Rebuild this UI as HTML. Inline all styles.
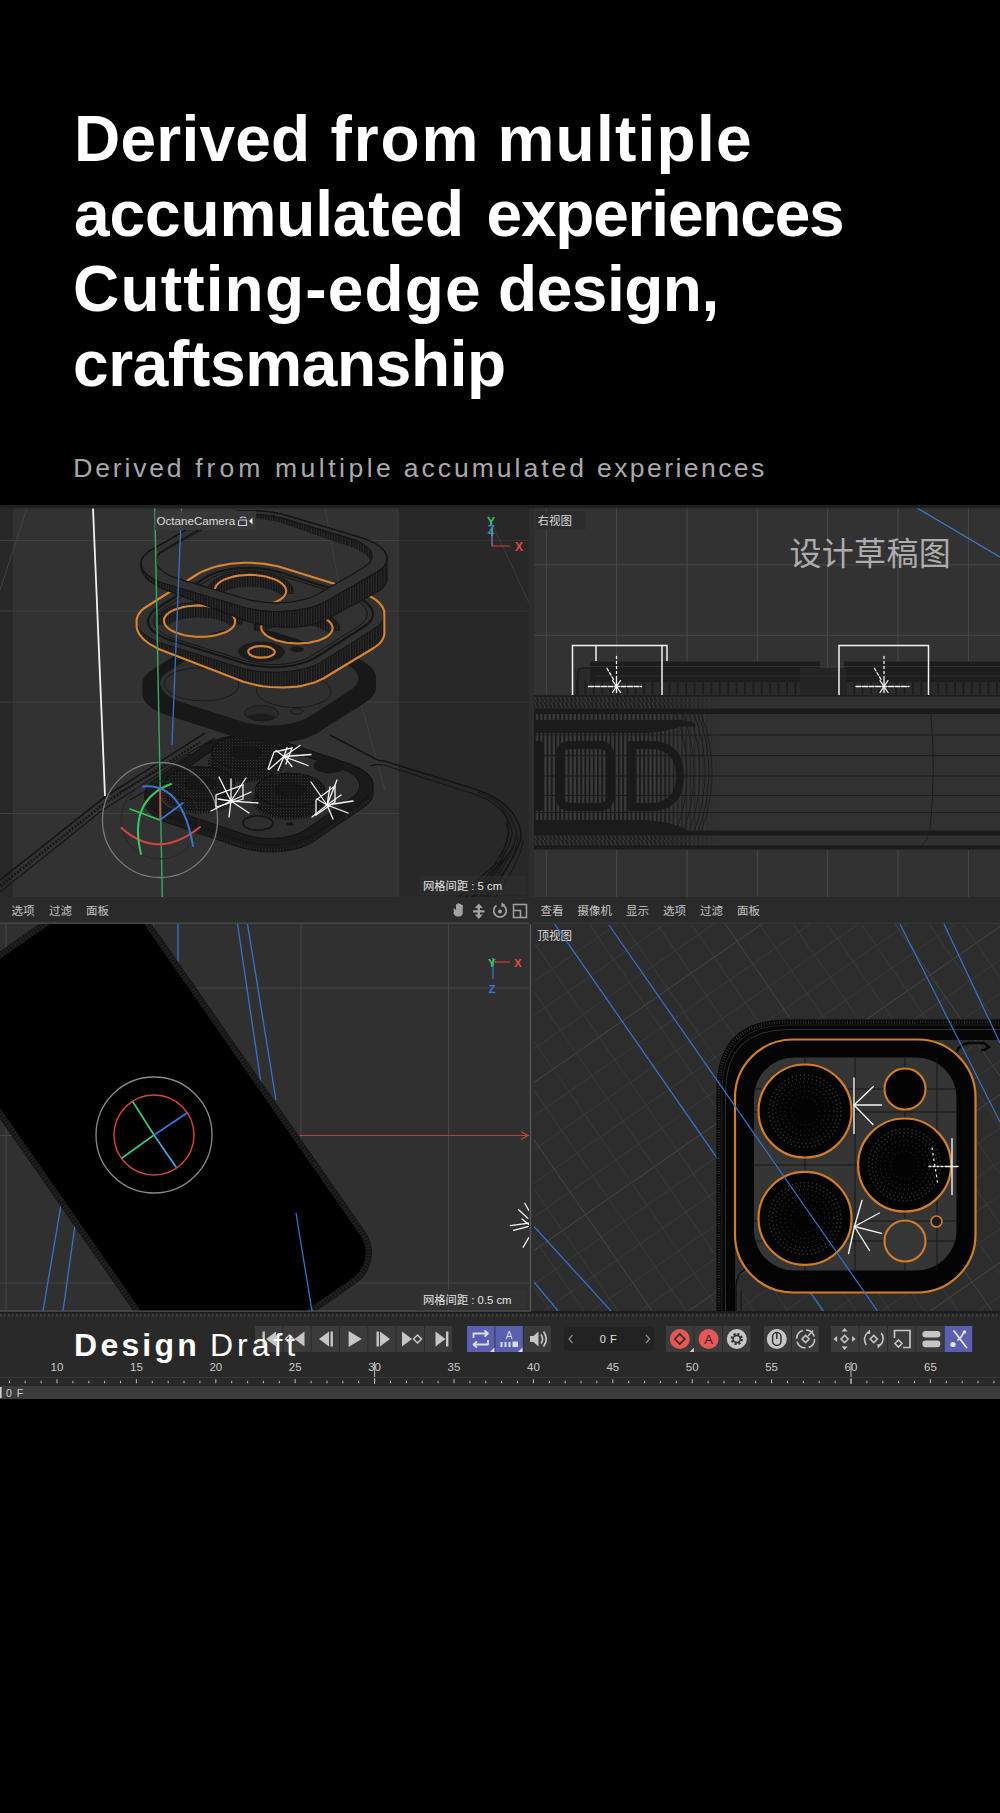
<!DOCTYPE html>
<html><head><meta charset="utf-8"><title>Design Draft</title>
<style>
html,body{margin:0;padding:0;background:#000;}
body{width:1000px;height:1813px;position:relative;overflow:hidden;font-family:"Liberation Sans","Noto Sans CJK SC",sans-serif;}
.h{position:absolute;color:#fff;font-weight:bold;font-size:64px;line-height:75px;white-space:nowrap;transform-origin:0 0;}
.sub{position:absolute;color:#a9a9a9;font-size:26.5px;line-height:36px;white-space:nowrap;}
#shot{position:absolute;left:0;top:505px;width:1000px;height:894px;display:block;}
.dd{position:absolute;color:#fff;font-size:32px;line-height:40px;white-space:nowrap;}
</style></head><body>
<span class="h" style="left:74.0px;top:102.1px;letter-spacing:0.22px">Derived</span>
<span class="h" style="left:330.6px;top:102.1px;letter-spacing:1.83px">from</span>
<span class="h" style="left:497.4px;top:102.1px;letter-spacing:1.26px">multiple</span>
<span class="h" style="left:74.0px;top:177.1px;letter-spacing:-0.12px">accumulated</span>
<span class="h" style="left:486.5px;top:177.1px;letter-spacing:-1.19px">experiences</span>
<span class="h" style="left:73.0px;top:252.1px;letter-spacing:1.18px">Cutting-edge</span>
<span class="h" style="left:498.0px;top:252.1px;letter-spacing:-0.46px">design,</span>
<span class="h" style="left:73.0px;top:327.1px;letter-spacing:-0.36px">craftsmanship</span>
<span class="sub" style="left:73.2px;top:450px;letter-spacing:2.84px">Derived</span>
<span class="sub" style="left:195.2px;top:450px;letter-spacing:4.02px">from</span>
<span class="sub" style="left:275.0px;top:450px;letter-spacing:3.49px">multiple</span>
<span class="sub" style="left:403.8px;top:450px;letter-spacing:2.99px">accumulated</span>
<span class="sub" style="left:597.0px;top:450px;letter-spacing:2.44px">experiences</span>
<svg id="shot" viewBox="0 505 1000 894" width="1000" height="894" font-family="'Liberation Sans','Noto Sans CJK SC',sans-serif">
<rect x="0" y="505" width="1000" height="894" fill="#2a2a2a"/>
<rect x="0" y="505" width="1000" height="3.5" fill="#202020"/>
<rect x="0" y="508.5" width="13" height="389" fill="#282828"/>
<rect x="13" y="508.5" width="386" height="389" fill="#323232"/>
<rect x="399" y="508.5" width="130" height="389" fill="#282828"/>
<rect x="529" y="508.5" width="5" height="803" fill="#2d2d2d"/>
<rect x="534" y="508.5" width="466" height="389" fill="#323232"/>
<rect x="0" y="924" width="529" height="387" fill="#303030"/>
<rect x="534" y="924" width="466" height="387" fill="#2d2d2d"/>

<defs><clipPath id="cTL"><rect x="0" y="508.5" width="529" height="388.5"/></clipPath>
<pattern id="hv" width="2.6" height="8" patternUnits="userSpaceOnUse"><rect width="2.6" height="8" fill="#2b2b2b"/><rect width="1.4" height="8" fill="#141414"/></pattern>
<pattern id="dots" width="3" height="3" patternUnits="userSpaceOnUse"><rect width="3" height="3" fill="#181818"/><rect width="1" height="1" x="1" y="1" fill="#343434"/></pattern>
</defs>
<g clip-path="url(#cTL)">
<g stroke="#414141" stroke-width="1" fill="none">
<line x1="0" y1="540.5" x2="399" y2="540.5"/>
<line x1="399" y1="540.5" x2="529" y2="540.5" stroke="#343434"/>
<line x1="0" y1="611" x2="399" y2="611"/>
<line x1="399" y1="611" x2="529" y2="611" stroke="#343434"/>
<line x1="0" y1="702" x2="399" y2="702"/>
<line x1="399" y1="702" x2="529" y2="702" stroke="#343434"/>
<line x1="0" y1="813.5" x2="399" y2="813.5"/>
<path d="M27 508 L0 590"/><path d="M488 515 L530 605" stroke="#3c3c3c"/><path d="M325 508 L360 700 L385 790" stroke="#3f3f3f"/>
</g>
<g fill="none" stroke="#151515" stroke-width="1.6">
<path d="M-5 884 L105 797 L205 733"/>
<path d="M-5 890 L105 803 L200 742" stroke-width="2.4" stroke-dasharray="2 1.5"/>
<path d="M-5 896 L100 812 L190 754" stroke-width="1.2"/>
<path d="M478 792 Q510 804 516 832 Q518 850 477 905" stroke="#1e1e1e" stroke-width="2.5"/>
<path d="M500 806 Q508 815 509 832 Q509 848 466 905" stroke="#1c1c1c" stroke-width="1.4"/>
<path d="M330 735 L372 757 Q378 761 384 761 L478 790 Q515 803 521 832 Q523 850 480 905"/>
<path d="M370 766 Q376 764 384 765 L474 794 Q507 805 512 832 Q513 848 470 905" stroke-width="1.2"/>
<path d="M523 840 Q522 860 490 905" stroke-width="1"/><path d="M518 836 Q518 856 484 905" stroke-width="1"/>
<path d="M120 792 L215 738 M130 800 L222 746" stroke-width="1.1"/>
<path d="M514 846 L474 905 M510 852 L467 905 M505 858 L458 905 M498 862 L449 905" stroke-width="1.2"/>
<path d="M506 822 Q512 836 500 858" stroke-width="1.2"/>
</g>
<path d="M244.0 735.2 232.2 736.1 221.2 738.3 216.2 739.8 207.4 743.7 151.1 782.5 148.6 785.1 146.7 787.8 145.5 790.6 144.9 793.5 145.0 803.4 145.7 806.2 147.2 809.0 149.2 811.7 155.2 816.8 163.3 821.1 240.0 847.1 250.5 849.9 262.1 851.5 274.0 851.8 280.0 851.5 285.8 850.9 296.8 848.7 301.8 847.2 310.6 843.3 363.8 806.9 366.9 804.5 369.4 801.9 371.3 799.2 372.5 796.4 373.1 793.5 373.0 783.6 372.3 780.8 370.8 778.0 368.8 775.3 366.1 772.7 359.0 768.0 350.0 764.1 272.9 738.3 261.8 736.1 255.9 735.5Z" fill="#191919" stroke="#141414" stroke-width="1.2"/>
<path d="M314.2 839.1 366.9 802.5 369.4 799.9 371.3 797.2 372.5 794.4 373.1 791.5 373.0 788.6 372.3 785.8 370.8 783.0 368.8 780.3 362.8 775.2 359.0 773.0 350.0 769.1 278.0 744.9 272.9 743.3 261.8 741.1 250.0 740.2 238.0 740.5 226.6 742.1 216.2 744.8 207.4 748.7 151.1 787.5 148.6 790.1 146.7 792.8 145.5 795.6 144.9 798.5 145.0 801.4 145.7 804.2 147.2 807.0 149.2 809.7 155.2 814.8 163.3 819.1 245.1 846.7 256.2 848.9 268.0 849.8 280.0 849.5 285.8 848.9 296.8 846.7 306.4 843.4Z" fill="none" stroke="#2c2c2c" stroke-width="3" stroke-dasharray="1 2" opacity="0.8"/>
<path d="M314.2 834.1 366.9 797.5 369.4 794.9 371.3 792.2 372.5 789.4 373.1 786.5 373.0 783.6 372.3 780.8 370.8 778.0 368.8 775.3 362.8 770.2 359.0 768.0 350.0 764.1 278.0 739.9 272.9 738.3 261.8 736.1 250.0 735.2 238.0 735.5 226.6 737.1 216.2 739.8 207.4 743.7 151.1 782.5 148.6 785.1 146.7 787.8 145.5 790.6 144.9 793.5 145.0 796.4 145.7 799.2 147.2 802.0 149.2 804.7 155.2 809.8 163.3 814.1 245.1 841.7 256.2 843.9 268.0 844.8 280.0 844.5 285.8 843.9 296.8 841.7 306.4 838.4Z" fill="#1a1a1a" stroke="#141414" stroke-width="1"/>
<path d="M306.2 829.4 354.4 795.8 358.1 791.4 359.2 789.0 359.6 786.7 359.6 784.2 358.9 781.9 357.7 779.5 356.0 777.2 353.8 775.1 347.9 771.2 340.3 768.0 273.9 745.5 269.6 744.3 260.4 742.4 250.5 741.6 240.5 741.9 230.9 743.2 222.2 745.5 214.9 748.7 163.6 784.2 159.9 788.6 158.8 791.0 158.4 793.3 158.4 795.8 159.1 798.1 162.0 802.8 166.9 807.0 173.7 810.5 248.4 835.7 257.6 837.6 267.5 838.4 272.5 838.4 282.4 837.6 291.6 835.7 299.6 833.0Z" fill="#2d2d2d" stroke="#121212" stroke-width="1"/>
<path d="M341.8 770.3 343.9 768.2 344.4 767.1 344.5 765.9 343.6 763.6 342.7 762.5 339.7 760.7 333.4 758.9 326.2 758.6 319.5 760.0 316.2 761.7 314.1 763.8 313.6 764.9 313.7 767.2 315.3 769.5 318.3 771.3 324.6 773.1 329.4 773.5 334.2 773.1 338.5 772.0Z" fill="#171717"/>
<path d="M245.1 735.8 239.6 736.1 229.3 737.7 220.7 740.9 217.2 742.9 214.5 745.1 212.5 747.6 211.4 750.2 211.1 763.8 211.6 766.4 213.1 769.0 215.3 771.4 218.3 773.6 221.9 775.6 230.9 778.6 236.1 779.6 246.9 780.4 252.4 780.1 262.7 778.5 271.3 775.3 274.8 773.3 277.5 771.1 279.5 768.6 280.6 766.0 280.9 752.4 280.4 749.8 278.9 747.2 276.7 744.8 273.7 742.6 270.1 740.6 261.1 737.6 255.9 736.6Z" fill="url(#dots)"/><path d="M276.0 773.7 278.8 771.4 280.8 768.8 282.0 766.1 282.3 763.4 281.7 760.7 280.3 758.0 277.9 755.5 274.8 753.2 271.0 751.1 266.6 749.4 261.7 748.0 250.7 746.3 245.1 746.1 233.9 747.1 228.7 748.1 223.9 749.6 219.6 751.4 216.0 753.5 213.2 755.8 211.2 758.4 210.0 761.1 209.7 763.8 210.3 766.5 211.7 769.2 214.1 771.7 217.2 774.0 221.0 776.1 230.3 779.2 241.3 780.9 246.9 781.1 258.1 780.1 268.1 777.6 272.4 775.8Z" fill="none" stroke="#101010" stroke-width="3.5" stroke-dasharray="1 1.6"/><path d="M274.8 762.3 277.5 760.1 279.5 757.6 280.6 755.0 280.9 752.4 280.4 749.8 278.9 747.2 276.7 744.8 273.7 742.6 270.1 740.6 265.8 738.9 261.1 737.6 255.9 736.6 245.1 735.8 239.6 736.1 229.3 737.7 220.7 740.9 217.2 742.9 214.5 745.1 212.5 747.6 211.4 750.2 211.1 752.8 211.6 755.4 213.1 758.0 215.3 760.4 218.3 762.6 221.9 764.6 230.9 767.6 241.4 769.2 252.4 769.1 262.7 767.5 271.3 764.3Z" fill="url(#dots)" stroke="#101010" stroke-width="1"/><path d="M259.0 757.0 260.2 756.0 261.6 753.7 261.5 751.3 260.8 750.2 259.8 749.1 256.8 747.2 250.5 745.4 243.1 745.2 236.4 746.5 233.0 748.2 231.8 749.2 230.4 751.5 230.5 753.9 232.2 756.1 235.2 758.0 241.5 759.8 246.4 760.2 251.2 759.8 255.6 758.7Z" fill="#141414" opacity="0.75"/>
<path d="M199.1 766.6 193.6 766.9 183.3 768.5 174.7 771.7 171.2 773.7 168.5 775.9 166.5 778.4 165.4 781.0 165.1 794.6 165.6 797.2 167.1 799.8 169.3 802.2 172.3 804.4 175.9 806.4 184.9 809.4 190.1 810.4 200.9 811.2 206.4 810.9 216.7 809.3 225.3 806.1 228.8 804.1 231.5 801.9 233.5 799.4 234.6 796.8 234.9 783.2 234.4 780.6 232.9 778.0 230.7 775.6 227.7 773.4 224.1 771.4 215.1 768.4 209.9 767.4Z" fill="url(#dots)"/><path d="M230.0 804.5 232.8 802.2 234.8 799.6 236.0 796.9 236.3 794.2 235.7 791.5 234.3 788.8 231.9 786.3 228.8 784.0 225.0 781.9 220.6 780.2 215.7 778.8 204.7 777.1 199.1 776.9 187.9 777.9 182.7 778.9 177.9 780.4 173.6 782.2 170.0 784.3 167.2 786.6 165.2 789.2 164.0 791.9 163.7 794.6 164.3 797.3 165.7 800.0 168.1 802.5 171.2 804.8 175.0 806.9 184.3 810.0 195.3 811.7 200.9 811.9 212.1 810.9 222.1 808.4 226.4 806.6Z" fill="none" stroke="#101010" stroke-width="3.5" stroke-dasharray="1 1.6"/><path d="M228.8 793.1 231.5 790.9 233.5 788.4 234.6 785.8 234.9 783.2 234.4 780.6 232.9 778.0 230.7 775.6 227.7 773.4 224.1 771.4 219.8 769.7 215.1 768.4 209.9 767.4 199.1 766.6 193.6 766.9 183.3 768.5 174.7 771.7 171.2 773.7 168.5 775.9 166.5 778.4 165.4 781.0 165.1 783.6 165.6 786.2 167.1 788.8 169.3 791.2 172.3 793.4 175.9 795.4 184.9 798.4 195.4 800.0 206.4 799.9 216.7 798.3 225.3 795.1Z" fill="url(#dots)" stroke="#101010" stroke-width="1"/><path d="M213.0 787.8 214.2 786.8 215.6 784.5 215.5 782.1 214.8 781.0 213.8 779.9 210.8 778.0 204.5 776.2 197.1 776.0 190.4 777.3 187.0 779.0 185.8 780.0 184.4 782.3 184.5 784.7 186.2 786.9 189.2 788.8 195.5 790.6 200.4 791.0 205.2 790.6 209.6 789.5Z" fill="#141414" opacity="0.75"/>
<path d="M289.1 773.2 283.6 773.5 273.3 775.1 264.7 778.3 261.2 780.3 258.5 782.5 256.5 785.0 255.4 787.6 255.1 801.2 255.6 803.8 257.1 806.4 259.3 808.8 262.3 811.0 265.9 813.0 274.9 816.0 280.1 817.0 290.9 817.8 296.4 817.5 306.7 815.9 315.3 812.7 318.8 810.7 321.5 808.5 323.5 806.0 324.6 803.4 324.9 789.8 324.4 787.2 322.9 784.6 320.7 782.2 317.7 780.0 314.1 778.0 305.1 775.0 299.9 774.0Z" fill="url(#dots)"/><path d="M320.0 811.1 322.8 808.8 324.8 806.2 326.0 803.5 326.3 800.8 325.7 798.1 324.3 795.4 321.9 792.9 318.8 790.6 315.0 788.5 310.6 786.8 305.7 785.4 294.7 783.7 289.1 783.5 277.9 784.5 272.7 785.5 267.9 787.0 263.6 788.8 260.0 790.9 257.2 793.2 255.2 795.8 254.0 798.5 253.7 801.2 254.3 803.9 255.7 806.6 258.1 809.1 261.2 811.4 265.0 813.5 274.3 816.6 285.3 818.3 290.9 818.5 302.1 817.5 312.1 815.0 316.4 813.2Z" fill="none" stroke="#101010" stroke-width="3.5" stroke-dasharray="1 1.6"/><path d="M318.8 799.7 321.5 797.5 323.5 795.0 324.6 792.4 324.9 789.8 324.4 787.2 322.9 784.6 320.7 782.2 317.7 780.0 314.1 778.0 309.8 776.3 305.1 775.0 299.9 774.0 289.1 773.2 283.6 773.5 273.3 775.1 264.7 778.3 261.2 780.3 258.5 782.5 256.5 785.0 255.4 787.6 255.1 790.2 255.6 792.8 257.1 795.4 259.3 797.8 262.3 800.0 265.9 802.0 270.2 803.7 280.1 806.0 290.9 806.8 301.7 805.9 311.3 803.5 315.3 801.7Z" fill="url(#dots)" stroke="#101010" stroke-width="1"/><path d="M303.0 794.4 304.2 793.4 305.6 791.1 305.5 788.7 304.8 787.6 303.8 786.5 300.8 784.6 294.5 782.8 287.1 782.6 280.4 783.9 277.0 785.6 274.9 787.7 274.4 788.9 274.5 791.3 276.2 793.5 279.2 795.4 285.5 797.2 290.4 797.6 295.2 797.2 299.6 796.1Z" fill="#141414" opacity="0.75"/>
<path d="M270.4 827.2 271.6 826.2 272.9 824.1 272.8 821.8 271.2 819.7 269.9 818.7 264.5 816.5 257.6 815.8 250.8 816.6 245.6 818.8 244.4 819.8 243.1 821.9 243.2 824.2 244.8 826.3 247.6 828.2 251.5 829.5 256.0 830.1 260.7 830.1 265.2 829.4Z" fill="#2e2e2e" stroke="#141414" stroke-width="1.6"/>
<path d="M292.8 824.9 293.4 824.2 293.2 823.5 291.5 822.5 288.4 822.6 287.2 823.1 286.6 823.8 287.0 824.8 288.5 825.5 290.6 825.6Z" fill="#141414"/>
<path d="M243.2 628.5 230.4 629.4 224.3 630.3 213.0 633.1 203.5 636.9 149.0 672.1 146.3 674.7 144.2 677.5 142.9 680.3 142.4 683.2 142.5 695.6 143.4 698.6 145.0 701.4 147.3 704.2 150.3 706.8 153.9 709.4 162.8 713.8 238.0 738.0 243.6 739.6 255.8 741.9 268.7 743.0 275.2 743.0 281.7 742.7 294.1 741.2 305.4 738.4 314.9 734.6 366.1 701.9 369.4 699.4 372.1 696.8 374.2 694.0 375.5 691.2 376.0 688.3 375.9 675.9 375.0 672.9 373.4 670.1 371.1 667.3 368.1 664.7 360.3 659.8 350.4 655.9 274.8 631.9 262.6 629.6 249.7 628.5Z" fill="#181818"/>
<path d="M310.3 716.3 352.6 688.8 354.9 686.5 356.6 684.2 357.7 681.7 358.2 679.2 358.1 676.7 357.3 674.2 356.0 671.7 354.0 669.3 348.3 664.9 344.7 662.9 336.1 659.5 277.8 640.8 267.8 638.3 257.0 636.9 251.3 636.5 240.1 636.7 229.4 638.1 219.7 640.4 211.5 643.7 165.8 673.2 163.5 675.5 161.8 677.8 160.7 680.3 160.2 682.8 160.3 685.3 161.1 687.8 162.4 690.3 164.4 692.7 170.1 697.1 177.8 700.9 245.4 722.5 255.9 724.5 267.1 725.5 278.3 725.3 289.0 723.9 298.7 721.6 303.0 720.0Z" fill="#2f2f2f"/>
<g fill="none" stroke="#1a1a1a" stroke-width="1">
<path d="M283.2 662.7 285.2 660.3 286.4 657.8 286.6 655.2 286.0 652.6 284.4 650.0 282.0 647.6 278.8 645.4 274.8 643.4 270.3 641.7 259.7 639.3 248.2 638.5 236.8 639.3 231.5 640.2 222.3 643.3 218.7 645.3 215.8 647.5 213.7 649.9 212.6 652.4 212.3 655.0 213.0 657.7 214.5 660.2 217.0 662.6 220.2 664.8 224.1 666.8 228.7 668.5 239.2 670.9 250.8 671.8 262.2 671.0 272.4 668.6 276.7 666.9 280.3 665.0Z"/>
<path d="M235.4 692.0 237.5 689.6 238.6 687.0 238.9 684.4 238.2 681.8 236.7 679.3 234.3 676.8 231.0 674.6 227.1 672.6 217.5 669.5 212.0 668.5 200.4 667.7 194.6 667.9 183.7 669.5 178.8 670.8 174.5 672.5 170.9 674.5 168.0 676.7 166.0 679.1 164.8 681.7 164.6 684.3 165.2 686.9 166.8 689.4 169.2 691.8 172.4 694.1 176.4 696.1 180.9 697.8 191.5 700.2 203.0 701.0 214.4 700.2 219.8 699.2 228.9 696.2 232.6 694.2Z"/>
<path d="M327.3 698.5 329.4 696.1 330.5 693.6 330.8 691.0 330.1 688.4 328.6 685.8 326.2 683.4 322.9 681.2 319.0 679.2 314.4 677.5 303.9 675.1 292.4 674.3 280.9 675.1 275.6 676.0 266.5 679.1 262.8 681.1 259.9 683.3 257.9 685.7 256.7 688.2 256.5 690.8 257.1 693.5 258.7 696.0 261.1 698.4 264.3 700.6 268.3 702.6 272.8 704.3 283.4 706.7 294.9 707.6 306.4 706.8 311.7 705.8 320.8 702.7 324.5 700.8Z"/>
</g>
<path d="M275.8 717.7 277.1 716.7 278.5 714.5 278.7 713.3 277.6 710.9 275.1 708.8 273.2 707.8 266.3 706.0 261.0 705.6 253.3 706.4 247.4 708.7 246.1 709.7 244.6 712.0 244.8 714.4 246.6 716.7 252.0 719.4 256.9 720.5 262.2 720.9 267.4 720.5 272.1 719.4Z" fill="#2a2a2a" stroke="#1a1a1a" stroke-width="1"/>
<path d="M276.1 717.5 273.2 715.8 268.8 714.4 261.0 713.6 253.3 714.4 249.1 715.8 247.1 717.0 249.9 718.6 254.4 720.0 262.2 720.9 269.9 720.1 274.1 718.7Z" fill="#1c1c1c"/>
<path d="M301.7 713.0 302.7 711.9 302.4 710.6 300.8 709.5 298.4 708.9 295.6 708.8 293.0 709.2 291.7 709.8 290.8 711.0 290.8 711.8 291.5 712.6 295.1 714.0 298.8 714.0Z" fill="none" stroke="#1a1a1a" stroke-width="1"/>
<path d="M138.7 614.1 137.3 617.1 136.6 620.1 136.7 627.6 137.6 630.8 139.3 634.1 141.7 637.2 144.8 640.3 148.6 643.3 153.1 646.1 163.5 651.0 243.4 681.8 256.3 685.1 269.9 687.0 283.7 687.5 297.0 686.6 308.9 684.3 319.1 680.7 323.3 678.5 373.7 648.0 377.3 645.5 380.2 642.8 382.3 639.9 383.7 636.9 384.4 633.7 384.4 614.9 384.3 611.8 383.4 608.8 381.7 605.8 379.3 602.9 376.2 600.2 372.4 597.6 367.9 595.2 357.5 591.0 283.5 568.0 271.3 565.0 257.9 563.2 244.1 562.8 230.5 563.8 217.9 566.1 206.7 569.5 197.7 574.0 147.3 606.0 143.7 608.5 140.8 611.3Z M267.6 604.5 262.5 605.5 251.6 606.3 240.5 605.5 235.3 604.6 226.0 601.7 222.3 599.8 219.2 597.7 217.6 596.1 221.0 593.3 224.5 591.4 228.7 589.8 238.5 587.6 249.4 586.8 260.5 587.6 270.6 589.8 278.7 593.3 281.8 595.4 283.4 596.9 280.0 599.8 276.5 601.6Z M225.5 632.2 216.7 635.1 206.2 636.7 195.0 636.7 189.5 636.1 184.3 635.2 175.1 632.3 171.3 630.4 168.2 628.3 166.7 626.7 170.1 623.9 173.6 622.1 182.4 619.2 187.5 618.2 198.5 617.4 209.5 618.2 214.8 619.1 224.0 622.0 227.8 623.9 230.8 626.0 232.4 627.6 229.0 630.4Z M322.9 638.8 314.0 641.7 308.9 642.7 303.5 643.3 292.4 643.3 286.9 642.7 276.8 640.5 268.7 637.0 265.6 634.9 264.0 633.3 267.4 630.5 270.9 628.6 279.8 625.8 290.3 624.2 301.4 624.2 306.9 624.8 317.0 627.0 325.1 630.5 328.2 632.6 329.8 634.1 326.4 637.0Z" fill="url(#hv)" fill-rule="evenodd"/>
<path d="M383.7 617.9 384.4 614.9 384.3 611.8 383.4 608.8 381.7 605.8 379.3 602.9 376.2 600.2 372.4 597.6 363.0 593.0 277.6 566.3 264.7 563.9 257.9 563.2 244.1 562.8 230.5 563.8 217.9 566.1 212.1 567.7 201.9 571.7 197.7 574.0 143.7 608.5 140.8 611.3 138.7 614.1 137.3 617.1 136.6 620.1 136.7 623.2 137.6 626.2 139.3 629.2 141.7 632.1 144.8 634.8 148.6 637.4 158.0 642.0 243.4 668.7 256.3 671.1 263.1 671.8 276.9 672.2 290.5 671.2 303.1 668.9 308.9 667.3 319.1 663.3 373.7 629.0 377.3 626.5 380.2 623.7 382.3 620.9Z M262.5 605.5 251.6 606.3 246.0 606.1 235.3 604.6 226.0 601.7 222.3 599.8 219.2 597.7 216.9 595.4 215.4 593.0 214.8 590.6 215.1 588.1 216.3 585.7 218.2 583.4 221.0 581.3 224.5 579.4 233.4 576.6 243.9 575.0 255.0 575.0 265.7 576.5 275.0 579.4 278.7 581.3 281.8 583.4 284.1 585.7 285.6 588.1 286.2 590.5 285.9 593.0 284.7 595.4 282.8 597.6 280.0 599.8 276.5 601.6 272.3 603.2Z M216.7 635.1 206.2 636.7 195.0 636.7 184.3 635.2 179.4 633.9 171.3 630.4 168.2 628.3 166.0 626.0 164.5 623.6 163.9 621.2 164.1 618.7 165.3 616.3 167.3 614.0 170.1 611.9 173.6 610.1 177.7 608.5 187.5 606.2 198.5 605.4 204.1 605.6 214.8 607.1 219.6 608.4 227.8 611.9 230.8 614.0 233.1 616.3 234.6 618.7 235.2 621.1 234.9 623.6 233.8 626.0 231.8 628.3 229.0 630.4 225.5 632.2Z M318.7 640.4 308.9 642.7 298.0 643.5 286.9 642.7 276.8 640.5 268.7 637.0 265.6 634.9 263.3 632.6 261.8 630.2 261.2 627.8 261.5 625.3 262.7 622.9 264.6 620.6 267.4 618.5 270.9 616.6 275.1 615.0 279.8 613.8 290.3 612.2 301.4 612.2 306.9 612.8 317.0 615.0 325.1 618.5 328.2 620.6 330.5 622.9 332.0 625.3 332.6 627.7 332.3 630.2 331.1 632.6 329.2 634.8 326.4 637.0 322.9 638.8Z M271.2 656.0 267.9 657.1 263.9 657.6 259.8 657.6 255.8 657.1 252.3 656.0 249.8 654.5 248.4 652.8 248.3 650.9 248.7 650.0 250.5 648.4 255.1 646.6 261.1 646.0 267.1 646.6 272.0 648.4 274.5 650.9 274.8 651.8 274.2 653.7Z" fill="#313131" fill-rule="evenodd" stroke="#161616" stroke-width="1"/>
<path d="M315.7 657.5 366.8 624.8 369.3 622.5 371.1 620.0 372.4 617.4 372.9 614.8 372.8 612.2 372.0 609.6 370.6 607.0 368.5 604.5 365.8 602.1 358.7 597.8 349.7 594.3 279.3 572.3 268.8 569.7 257.2 568.2 251.3 567.9 239.4 568.1 228.0 569.5 217.7 572.0 208.9 575.5 154.2 610.2 151.7 612.5 149.9 615.0 148.6 617.6 148.1 620.2 148.2 622.8 149.0 625.4 150.4 628.0 152.5 630.5 158.5 635.1 166.6 639.0 246.8 664.1 257.9 666.2 269.7 667.1 281.6 666.9 293.0 665.5 298.3 664.3 307.9 661.3Z" fill="none" stroke="#161616" stroke-width="2.2"/>
<path d="M358.7 626.1 363.8 621.8 365.5 619.6 366.7 617.2 367.2 614.8 367.1 612.4 366.4 610.0 365.0 607.6 363.1 605.3 360.7 603.1 354.1 599.2 345.8 595.9 277.2 574.5 267.5 572.1 262.3 571.3 251.4 570.4 240.5 570.6 230.0 571.9 220.5 574.2 212.4 577.4 159.5 611.0 155.5 615.4 154.3 617.8 153.8 620.2 153.9 622.6 154.6 625.0 156.0 627.4 157.9 629.7 163.4 633.9 170.8 637.5 248.5 661.8 258.7 663.7 269.6 664.6 280.5 664.4 291.0 663.1 300.5 660.8 304.7 659.3 311.9 655.7Z" fill="none" stroke="#161616" stroke-width="1"/>
<path d="M293.0 593.5 293.3 590.5 292.6 587.6 290.8 584.7 288.1 581.9 284.4 579.4 279.9 577.2 274.6 575.3 268.8 573.7 255.9 571.9 249.2 571.7 236.1 572.6 229.9 573.8 224.3 575.3 219.3 577.2 215.1 579.5 211.8 582.0 209.4 584.7 208.0 587.6 207.7 590.6 208.4 593.5 215.8 593.5 214.8 590.6 215.1 588.1 216.3 585.7 218.2 583.4 221.0 581.3 224.5 579.4 228.7 577.8 238.5 575.6 249.4 574.8 255.0 575.0 265.7 576.5 275.0 579.4 278.7 581.3 281.8 583.4 284.1 585.7 285.6 588.1 286.2 590.5 285.6 593.5Z" fill="url(#hv)" stroke="#161616" stroke-width="0.8"/>
<path d="M242.0 624.1 242.3 621.1 241.6 618.2 239.8 615.3 237.1 612.6 233.4 610.0 228.9 607.8 223.7 605.9 217.8 604.3 211.5 603.2 205.0 602.5 191.6 602.5 185.1 603.2 179.0 604.4 173.3 605.9 168.4 607.8 164.2 610.1 160.8 612.6 158.4 615.4 157.1 618.2 156.7 621.2 157.5 624.2 164.8 624.2 163.9 621.2 164.1 618.7 165.3 616.3 167.3 614.0 170.1 611.9 173.6 610.1 177.7 608.5 187.5 606.2 198.5 605.4 204.1 605.6 214.8 607.1 224.0 610.0 227.8 611.9 230.8 614.0 233.1 616.3 234.6 618.7 235.2 621.1 234.7 624.2Z" fill="url(#hv)" stroke="#161616" stroke-width="0.8"/>
<path d="M339.4 630.7 339.7 627.7 339.0 624.8 337.2 621.9 334.5 619.1 330.8 616.6 326.3 614.4 321.0 612.5 315.2 610.9 308.9 609.8 295.6 608.9 288.9 609.1 276.3 611.0 270.7 612.5 265.7 614.4 261.5 616.7 258.2 619.2 255.8 621.9 254.4 624.8 254.1 627.8 254.8 630.7 262.2 630.7 261.2 627.8 261.5 625.3 262.7 622.9 264.6 620.6 267.4 618.5 270.9 616.6 275.1 615.0 284.9 612.8 295.8 612.0 301.4 612.2 312.1 613.7 321.4 616.6 325.1 618.5 328.2 620.6 330.5 622.9 332.0 625.3 332.6 627.7 332.0 630.7Z" fill="url(#hv)" stroke="#161616" stroke-width="0.8"/>
<path d="M282.5 656.5 283.8 655.0 284.6 653.4 284.7 651.8 284.4 650.2 281.9 647.2 279.9 645.8 274.6 643.5 268.0 642.1 264.4 641.7 257.1 641.7 253.6 642.1 247.2 643.6 242.2 645.8 240.4 647.2 239.1 648.7 238.3 650.3 238.2 651.9 238.6 653.5 239.5 655.0 243.0 657.9 248.3 660.2 254.9 661.6 258.5 662.0 265.8 662.0 272.7 661.0 278.4 659.1Z M271.2 656.0 267.9 657.1 263.9 657.6 259.8 657.6 255.8 657.1 252.3 656.0 249.8 654.5 248.4 652.8 248.3 650.9 248.7 650.0 250.5 648.4 255.1 646.6 261.1 646.0 267.1 646.6 272.0 648.4 274.5 650.9 274.8 651.8 274.2 653.7Z" fill="#1b1b1b"/>
<path d="M302.7 651.1 303.8 649.8 303.5 648.4 301.7 647.2 299.9 646.6 296.8 646.3 293.7 646.6 291.3 647.5 290.1 648.9 290.2 649.8 290.9 650.7 293.1 651.8 295.0 652.2 299.3 652.2Z" fill="#181818"/>
<g fill="none" stroke="#d98530" stroke-width="2.1" stroke-linejoin="round">
<path d="M197.7 574.0 143.7 608.5 140.8 611.3 138.7 614.1 137.3 617.1 136.6 620.1 136.6 624.4 136.7 627.6 137.6 630.8 139.3 634.1 141.7 637.2 144.8 640.3 148.6 643.3 158.0 648.7 243.4 681.8 256.3 685.1 263.1 686.2 269.9 687.0 283.7 687.5 297.0 686.6 303.1 685.6 314.3 682.6 323.3 678.5 373.7 648.0 377.3 645.5 380.2 642.8 382.3 639.9 383.7 636.9 384.4 633.7 384.3 611.8 383.4 608.8 381.7 605.8 379.3 602.9 376.2 600.2 372.4 597.6 367.9 595.2 357.5 591.0 283.5 568.0 277.6 566.3 264.7 563.9 251.1 562.8 244.1 562.8 230.5 563.8 217.9 566.1 212.1 567.7 201.9 571.7Z"/>
<path d="M280.0 599.8 282.8 597.6 284.7 595.4 285.9 593.0 286.2 590.5 285.6 588.1 284.1 585.7 281.8 583.4 278.7 581.3 275.0 579.4 265.7 576.5 255.0 575.0 249.4 574.8 238.5 575.6 233.4 576.6 224.5 579.4 221.0 581.3 218.2 583.4 216.3 585.7 215.1 588.1 214.8 590.6 215.4 593.0 216.9 595.4 219.2 597.7 222.3 599.8 226.0 601.7 235.3 604.6 246.0 606.1 251.6 606.3 262.5 605.5 272.3 603.2 276.5 601.6Z"/>
<path d="M229.0 630.4 231.8 628.3 233.8 626.0 234.9 623.6 235.2 621.1 234.6 618.7 233.1 616.3 230.8 614.0 227.8 611.9 224.0 610.0 214.8 607.1 204.1 605.6 198.5 605.4 187.5 606.2 182.4 607.2 173.6 610.1 170.1 611.9 167.3 614.0 165.3 616.3 164.1 618.7 163.9 621.2 164.5 623.6 166.0 626.0 168.2 628.3 171.3 630.4 175.1 632.3 184.3 635.2 195.0 636.7 206.2 636.7 216.7 635.1 225.5 632.2Z"/>
<path d="M326.4 637.0 329.2 634.8 331.1 632.6 332.3 630.2 332.6 627.7 332.0 625.3 330.5 622.9 328.2 620.6 325.1 618.5 321.4 616.6 317.0 615.0 306.9 612.8 301.4 612.2 290.3 612.2 279.8 613.8 275.1 615.0 270.9 616.6 267.4 618.5 264.6 620.6 262.7 622.9 261.5 625.3 261.2 627.8 261.8 630.2 263.3 632.6 265.6 634.9 268.7 637.0 276.8 640.5 286.9 642.7 298.0 643.5 308.9 642.7 318.7 640.4 322.9 638.8Z"/>
<path d="M269.6 656.6 273.5 654.5 274.7 652.8 274.8 651.8 274.0 650.0 270.6 647.7 267.1 646.6 261.1 646.0 255.1 646.6 250.5 648.4 248.7 650.0 248.3 650.9 248.4 652.8 249.8 654.5 252.3 656.0 255.8 657.1 259.8 657.6 266.0 657.4Z"/>
</g>
<path d="M202.2 520.5 148.2 551.8 145.3 554.3 143.1 556.9 141.7 559.7 141.0 562.4 141.0 565.4 141.1 568.4 142.0 571.4 143.6 574.5 145.9 577.5 149.0 580.4 152.7 583.2 157.1 585.9 167.5 590.7 240.5 619.0 246.4 621.1 259.2 624.4 272.7 626.5 286.4 627.3 299.6 626.7 311.5 624.9 321.6 621.7 325.8 619.7 379.8 590.3 382.7 587.9 384.9 585.3 386.3 582.5 387.0 579.6 386.9 556.7 386.0 553.9 384.4 551.2 382.1 548.5 379.0 545.9 375.3 543.5 370.9 541.3 360.5 537.4 287.5 515.6 281.6 514.0 268.8 511.7 255.3 510.6 241.6 510.8 228.4 512.2 222.3 513.3 211.2 516.4Z M362.6 568.3 317.6 594.2 309.9 597.7 300.3 600.4 289.4 602.1 277.8 602.8 271.9 602.7 260.2 601.8 249.2 599.8 174.2 577.4 166.2 573.7 160.3 569.4 158.3 567.1 156.9 564.7 156.1 561.6 156.7 559.4 157.9 557.0 159.8 554.8 162.3 552.7 214.0 523.8 222.7 520.9 233.0 519.0 238.6 518.4 250.2 518.2 262.0 519.0 273.4 520.9 278.8 522.2 353.8 548.0 358.1 549.9 365.0 554.3 367.7 556.7 370.7 560.8 368.2 564.1Z" fill="url(#hv)" fill-rule="evenodd"/>
<path d="M379.8 570.2 382.7 567.7 384.9 565.1 386.3 562.3 387.0 559.6 386.9 556.7 386.0 553.9 384.4 551.2 382.1 548.5 379.0 545.9 375.3 543.5 370.9 541.3 360.5 537.4 281.6 514.0 268.8 511.7 255.3 510.6 241.6 510.8 228.4 512.2 216.5 514.7 206.4 518.4 148.2 551.8 145.3 554.3 143.1 556.9 141.7 559.7 141.0 562.4 141.1 565.3 142.0 568.1 143.6 570.8 145.9 573.5 149.0 576.1 152.7 578.5 162.0 582.8 246.4 608.0 259.2 610.3 272.7 611.4 279.6 611.5 293.1 610.7 305.7 608.7 316.8 605.6 325.8 601.5Z M317.6 594.2 309.9 597.7 305.3 599.2 295.0 601.4 289.4 602.1 277.8 602.8 266.0 602.4 254.6 600.9 249.2 599.8 178.9 578.9 169.9 575.6 163.0 571.6 158.3 567.1 156.9 564.7 156.2 562.3 156.1 559.9 156.7 557.5 157.9 555.1 159.8 552.9 162.3 550.7 210.4 522.8 218.1 519.3 222.7 517.8 233.0 515.6 244.3 514.4 250.2 514.2 262.0 514.6 273.4 516.1 283.9 518.6 353.8 539.6 361.8 543.3 367.7 547.6 369.7 549.9 371.1 552.3 371.8 554.7 371.9 557.1 371.3 559.5 370.1 561.9 368.2 564.1 362.6 568.3Z" fill="#313131" fill-rule="evenodd" stroke="#151515" stroke-width="1.2"/>
<path d="M202.2 520.5 148.2 551.8 145.3 554.3 143.1 556.9 141.7 559.7 141.0 562.4 141.0 565.4 141.1 568.4 142.0 571.4 143.6 574.5 145.9 577.5 149.0 580.4 152.7 583.2 162.0 588.4 246.4 621.1 259.2 624.4 265.9 625.6 279.6 627.1 293.1 627.2 299.6 626.7 305.7 626.0 316.8 623.4 325.8 619.7 376.2 592.6 379.8 590.3 382.7 587.9 384.9 585.3 386.3 582.5 387.0 579.6 387.0 559.6 386.9 556.7 386.0 553.9 384.4 551.2 382.1 548.5 379.0 545.9 375.3 543.5 366.0 539.2 287.5 515.6 281.6 514.0 268.8 511.7 262.1 511.0 248.4 510.5 241.6 510.8 228.4 512.2 222.3 513.3 211.2 516.4Z" fill="none" stroke="#151515" stroke-width="1.2"/>
<line x1="93" y1="508" x2="105" y2="796" stroke="#f0f0f0" stroke-width="1.8"/>
<line x1="181.5" y1="508" x2="172" y2="745" stroke="#3c6fc0" stroke-width="1.3"/>
<line x1="154.8" y1="508" x2="162.3" y2="897" stroke="#39a866" stroke-width="1.4"/>
<circle cx="160" cy="820" r="57.5" fill="none" stroke="#7a7a7a" stroke-width="1.3"/>
<circle cx="160" cy="820" r="39" fill="none" stroke="#262626" stroke-width="1"/>
<g fill="none" stroke-width="2" stroke-linecap="round">
<path d="M121.5 828 Q158 861 200 827" stroke="#d24545"/>
<path d="M171 784 Q128 800 141 854" stroke="#36c85e"/>
<path d="M143 786.5 Q182 782 193 846" stroke="#3c78d8" stroke-opacity="0.95"/>
<line x1="160" y1="820" x2="160" y2="790" stroke="#d24545" stroke-width="1.6"/>
<line x1="160" y1="820" x2="130" y2="809" stroke="#36c85e" stroke-width="1.6"/>
<line x1="160" y1="820" x2="183" y2="803" stroke="#3c78d8" stroke-width="1.6"/>
</g>
<g stroke="#f6f6f6" stroke-width="1.3" stroke-linecap="round" fill="none"><line x1="284.0" y1="756.5" x2="300.0" y2="745.5"/><line x1="284.0" y1="756.5" x2="311.0" y2="754.5"/><line x1="284.0" y1="756.5" x2="308.0" y2="765.5"/><line x1="284.0" y1="756.5" x2="292.0" y2="766.5"/><line x1="284.0" y1="756.5" x2="269.0" y2="769.5"/><line x1="284.0" y1="756.5" x2="276.0" y2="750.5"/><line x1="284.0" y1="756.5" x2="287.0" y2="747.5"/><line x1="284.0" y1="756.5" x2="278.0" y2="770.5"/><path d="M268 769 L274 752 L292 748 L286 764"/></g>
<g stroke="#f6f6f6" stroke-width="1.3" stroke-linecap="round" fill="none"><line x1="231.0" y1="801.0" x2="211.0" y2="811.0"/><line x1="231.0" y1="801.0" x2="219.0" y2="777.0"/><line x1="231.0" y1="801.0" x2="231.0" y2="779.0"/><line x1="231.0" y1="801.0" x2="246.0" y2="778.0"/><line x1="231.0" y1="801.0" x2="251.0" y2="792.0"/><line x1="231.0" y1="801.0" x2="258.0" y2="803.0"/><line x1="231.0" y1="801.0" x2="249.0" y2="813.0"/><line x1="231.0" y1="801.0" x2="229.0" y2="817.0"/><line x1="231.0" y1="801.0" x2="218.0" y2="799.0"/><path d="M216 807 V795 L243 785 V799 Z"/></g>
<g stroke="#f6f6f6" stroke-width="1.3" stroke-linecap="round" fill="none"><line x1="327.0" y1="805.0" x2="311.0" y2="782.0"/><line x1="327.0" y1="805.0" x2="337.0" y2="780.0"/><line x1="327.0" y1="805.0" x2="341.0" y2="795.0"/><line x1="327.0" y1="805.0" x2="353.0" y2="801.0"/><line x1="327.0" y1="805.0" x2="348.0" y2="813.0"/><line x1="327.0" y1="805.0" x2="333.0" y2="819.0"/><line x1="327.0" y1="805.0" x2="312.0" y2="817.0"/><line x1="327.0" y1="805.0" x2="317.0" y2="799.0"/><line x1="327.0" y1="805.0" x2="330.0" y2="787.0"/><path d="M316 815 V800 L335 786 V802 Z"/></g>
<rect x="155" y="511" width="101" height="19" fill="#3a3a3a" opacity="0.85"/>
<text x="156.5" y="524.8" font-size="11.6" fill="#dcdcdc">OctaneCamera</text>
<g fill="none" stroke="#c8cce8" stroke-width="1.2"><path d="M239.5 520 h7 v5.5 h-8 v-3.5 q0 -2 1 -2z M240 518 q3 -2 6 0"/></g><path d="M252.5 517.5 l-3.5 3.5 l3.5 3.5z" fill="#e8e8e8"/>
<rect x="420" y="876" width="106" height="19" fill="#303030" fill-opacity="0.55"/>
<text x="423" y="889.5" font-size="11.3" fill="#e4e4e4">网格间距 : 5 cm</text>
<g font-size="12" font-weight="bold"><text x="487" y="526" fill="#36c85e">Y</text><text x="487.5" y="534" fill="#3c78d8">Z</text><text x="515" y="551" fill="#e04848">X</text></g>
<path d="M492 528 V546 H510" fill="none" stroke="#d04040" stroke-width="1.2"/><path d="M492 528 V546" stroke="#3c78d8" stroke-width="1.2"/><path d="M492 528 V536" stroke="#36c85e" stroke-width="1.2"/>
</g>
<defs><clipPath id="cTR"><rect x="534" y="508.5" width="466" height="388.5"/></clipPath>
<pattern id="vw" x="534" y="0" width="4.2" height="10" patternUnits="userSpaceOnUse"><rect x="0" y="0" width="1.9" height="10" fill="#1a1a1a"/></pattern>
<pattern id="vw2" x="534" y="0" width="8.4" height="10" patternUnits="userSpaceOnUse"><rect x="0" y="0" width="2" height="10" fill="#1c1c1c"/></pattern>
<pattern id="hat" x="534" y="0" width="4.2" height="6" patternUnits="userSpaceOnUse"><rect x="0" y="0" width="4.2" height="6" fill="#202020"/><path d="M0.5 0 L2.6 6" stroke="#3a3a3a" stroke-width="1.2"/></pattern>
<linearGradient id="fadeR" x1="0" x2="1" y1="0" y2="0"><stop offset="0" stop-color="#fff"/><stop offset="1" stop-color="#000"/></linearGradient>
<mask id="mFade" maskUnits="userSpaceOnUse" x="534" y="690" width="200" height="170"><rect x="534" y="690" width="116" height="170" fill="#fff"/><rect x="650" y="690" width="70" height="170" fill="url(#fadeR)"/></mask>
</defs>
<g clip-path="url(#cTR)">
<g stroke="#484848" stroke-width="1">
<line x1="546.3" y1="508" x2="546.3" y2="897"/>
<line x1="616.6" y1="508" x2="616.6" y2="897"/>
<line x1="687.0" y1="508" x2="687.0" y2="897"/>
<line x1="757.3" y1="508" x2="757.3" y2="897"/>
<line x1="827.7" y1="508" x2="827.7" y2="897"/>
<line x1="898.0" y1="508" x2="898.0" y2="897"/>
<line x1="968.4" y1="508" x2="968.4" y2="897"/>
<line x1="1038.8" y1="508" x2="1038.8" y2="897"/>
<line x1="534" y1="564.8" x2="1000" y2="564.8"/>
<line x1="534" y1="635.3" x2="1000" y2="635.3"/>
<line x1="534" y1="705.8" x2="1000" y2="705.8"/>
<line x1="534" y1="776.3" x2="1000" y2="776.3"/>
<line x1="534" y1="847.5" x2="1000" y2="847.5"/>
</g>
<rect x="535.5" y="511" width="50" height="18.5" fill="#2c2c2c"/>
<text x="537.5" y="524.5" font-size="11.5" fill="#d8d8d8">右视图</text>
<text x="789.5" y="564.5" font-size="32" fill="#adadad" letter-spacing="0.3">设计草稿图</text>
<line x1="917" y1="508" x2="1000" y2="557" stroke="#3d79c8" stroke-width="1.3"/>
<rect x="575" y="668" width="425" height="28" fill="#2a2a2a"/>
<rect x="575" y="680" width="425" height="16" fill="url(#vw2)" opacity="0.9"/>
<rect x="590" y="661.5" width="230" height="20.5" fill="#1d1d1d"/>
<rect x="844" y="661.5" width="156" height="20.5" fill="#1d1d1d"/>
<rect x="800" y="668" width="46" height="27" fill="#242424"/>
<rect x="590" y="666" width="410" height="1" fill="#3a3a3a" opacity="0.7"/>
<rect x="596" y="675.5" width="404" height="1" fill="#383838" opacity="0.7"/>
<path d="M578 696 V672 Q578 668 584 668 H592" fill="none" stroke="#1c1c1c" stroke-width="1.5"/>
<rect x="534" y="695.5" width="466" height="154" fill="#313131"/>
<g mask="url(#mFade)"><rect x="534" y="695.5" width="190" height="154" fill="#3a3a3a"/><rect x="534" y="695.5" width="190" height="154" fill="url(#vw)"/></g>
<rect x="534" y="695.5" width="120" height="18" fill="url(#hat)"/>
<g mask="url(#mFade)"><rect x="654" y="695.5" width="70" height="18" fill="url(#hat)"/></g>
<rect x="534" y="834" width="120" height="15" fill="url(#hat)"/>
<g mask="url(#mFade)"><rect x="654" y="834" width="70" height="15" fill="url(#hat)"/></g>
<rect x="534" y="708.5" width="466" height="5.5" fill="#1b1b1b"/>
<rect x="534" y="830.5" width="466" height="5" fill="#1b1b1b"/>
<rect x="534" y="845.5" width="466" height="4" fill="#1b1b1b"/>
<rect x="534" y="695" width="466" height="1.6" fill="#1f1f1f"/>
<path d="M534 720 H680 Q694 721 696 726 L680 727 Q660 733 640 733 H534 Z" fill="#1b1b1b"/>
<path d="M534 820 H640 Q660 820 682 827 L690 833 H534 Z" fill="#1b1b1b"/>
<g stroke="#1d1d1d" stroke-width="1.1">
<line x1="534" y1="735.0" x2="1000" y2="735.0"/>
<line x1="534" y1="755.6" x2="1000" y2="755.6"/>
<line x1="534" y1="776.0" x2="1000" y2="776.0"/>
<line x1="534" y1="795.5" x2="1000" y2="795.5"/>
<line x1="534" y1="812.5" x2="1000" y2="812.5"/>
</g>
<path d="M931 714 Q936 770 930 830 Q928 840 922 846" fill="none" stroke="#1d1d1d" stroke-width="1"/>
<rect x="534" y="741" width="9" height="70" rx="4" fill="#1a1a1a"/>
<rect x="560" y="745" width="50" height="62" rx="9" fill="none" stroke="#1a1a1a" stroke-width="8"/>
<path d="M631 745 H655 Q680 748 680 776 Q680 804 655 807 H631 Z" fill="none" stroke="#1a1a1a" stroke-width="8" stroke-linejoin="round"/>
<g fill="none" stroke="#1c1c1c" stroke-width="1" opacity="0.8">
<path d="M676 714 Q698 772 676 832"/>
<path d="M683 714 Q705 772 683 832"/>
<path d="M689 714 Q711 772 689 832"/>
<path d="M694 714 Q716 772 694 832"/>
<path d="M698 714 Q720 772 698 832"/>
<path d="M701 714 Q723 772 701 832"/>
</g>
<g fill="none" stroke="#f2f2f2" stroke-width="1.5">
<path d="M572.5 695 V645.5 H662 V695"/><path d="M596 645.5 V661"/><path d="M662 645.5 H667 V661"/>
<path d="M839 695 V645.5 H928.5 V695"/>
</g>
<g stroke="#f4f4f4" stroke-width="1.3" stroke-linecap="round"><line x1="588.5" y1="686.5" x2="641.5" y2="686.5" stroke-dasharray="5 1.5"/><line x1="616.5" y1="686.5" x2="612.5" y2="680.5"/><line x1="616.5" y1="686.5" x2="620.5" y2="680.5"/><line x1="616.5" y1="686.5" x2="612.5" y2="692.5"/><line x1="616.5" y1="686.5" x2="620.5" y2="692.5"/><line x1="616.5" y1="686.5" x2="616.5" y2="679.5"/><line x1="616.5" y1="686.5" x2="616.5" y2="692.5"/><line x1="616.5" y1="678.5" x2="616.5" y2="656.5" stroke-dasharray="2 3"/><line x1="613.5" y1="679.5" x2="606.5" y2="667.5" stroke-dasharray="3 2"/></g>
<g stroke="#f4f4f4" stroke-width="1.3" stroke-linecap="round"><line x1="856.0" y1="686.5" x2="909.0" y2="686.5" stroke-dasharray="5 1.5"/><line x1="884.0" y1="686.5" x2="880.0" y2="680.5"/><line x1="884.0" y1="686.5" x2="888.0" y2="680.5"/><line x1="884.0" y1="686.5" x2="880.0" y2="692.5"/><line x1="884.0" y1="686.5" x2="888.0" y2="692.5"/><line x1="884.0" y1="686.5" x2="884.0" y2="679.5"/><line x1="884.0" y1="686.5" x2="884.0" y2="692.5"/><line x1="884.0" y1="678.5" x2="884.0" y2="656.5" stroke-dasharray="2 3"/><line x1="881.0" y1="679.5" x2="874.0" y2="667.5" stroke-dasharray="3 2"/></g>
</g>
<rect x="0" y="897" width="1000" height="26" fill="#2a2a2a"/>
<rect x="0" y="922.5" width="529" height="1.2" fill="#505050"/>
<rect x="533" y="922.5" width="467" height="1.2" fill="#3a3a3a"/>
<g font-size="11.5" fill="#c4c4c4">
<text x="11.5" y="914.6">选项</text>
<text x="49" y="914.6">过滤</text>
<text x="86" y="914.6">面板</text>
<text x="540.5" y="914.6">查看</text>
<text x="577.5" y="914.6">摄像机</text>
<text x="626" y="914.6">显示</text>
<text x="663" y="914.6">选项</text>
<text x="700" y="914.6">过滤</text>
<text x="737" y="914.6">面板</text>
</g>
<defs><clipPath id="cBL"><rect x="0" y="924" width="529" height="387"/></clipPath></defs>
<g clip-path="url(#cBL)">
<g stroke="#474747" stroke-width="1">
<line x1="6" y1="924" x2="6" y2="1311"/>
<line x1="153.5" y1="924" x2="153.5" y2="1311"/>
<line x1="301" y1="924" x2="301" y2="1311"/>
<line x1="448.5" y1="924" x2="448.5" y2="1311"/>
<line x1="0" y1="988" x2="529" y2="988"/>
<line x1="0" y1="1135.5" x2="529" y2="1135.5"/>
<line x1="0" y1="1283" x2="529" y2="1283"/>
</g>
<g stroke="#3672cc" stroke-width="1.3" fill="none">
<line x1="178" y1="924" x2="178" y2="965"/>
<line x1="237.5" y1="924" x2="262" y2="1090"/>
<line x1="247.5" y1="924" x2="276" y2="1100"/>
<line x1="61" y1="1205" x2="43" y2="1311"/>
<line x1="75" y1="1225" x2="63" y2="1311"/>
</g>
<path d="M353.9 1280.7 358.0 1277.3 361.6 1273.3 364.4 1268.8 366.6 1264.0 367.9 1258.8 368.5 1253.5 368.2 1248.2 367.0 1243.0 365.1 1238.0 362.4 1233.4 133.7 904.0 130.3 899.9 126.3 896.3 121.8 893.4 116.9 891.3 111.8 889.9 106.5 889.4 101.2 889.7 95.9 890.8 91.0 892.8 86.4 895.5 -45.9 987.3 -50.0 990.7 -53.6 994.7 -56.4 999.2 -58.6 1004.0 -59.9 1009.2 -60.5 1014.5 -60.2 1019.8 -59.0 1025.0 -57.1 1030.0 -54.4 1034.6 174.3 1364.0 177.7 1368.1 181.7 1371.7 186.2 1374.6 191.1 1376.7 196.2 1378.1 201.5 1378.6 206.8 1378.3 212.1 1377.2 217.0 1375.2 221.6 1372.5Z" fill="#000" stroke="#161616" stroke-width="7" stroke-linejoin="round"/>
<path d="M353.9 1280.7 358.0 1277.3 361.6 1273.3 364.4 1268.8 366.6 1264.0 367.9 1258.8 368.5 1253.5 368.2 1248.2 367.0 1243.0 365.1 1238.0 362.4 1233.4 133.7 904.0 130.3 899.9 126.3 896.3 121.8 893.4 116.9 891.3 111.8 889.9 106.5 889.4 101.2 889.7 95.9 890.8 91.0 892.8 86.4 895.5 -45.9 987.3 -50.0 990.7 -53.6 994.7 -56.4 999.2 -58.6 1004.0 -59.9 1009.2 -60.5 1014.5 -60.2 1019.8 -59.0 1025.0 -57.1 1030.0 -54.4 1034.6 174.3 1364.0 177.7 1368.1 181.7 1371.7 186.2 1374.6 191.1 1376.7 196.2 1378.1 201.5 1378.6 206.8 1378.3 212.1 1377.2 217.0 1375.2 221.6 1372.5Z" fill="none" stroke="#2c2c2c" stroke-width="5" stroke-dasharray="1 2.3" opacity="0.7"/>
<path d="M352.2 1278.2 355.9 1275.2 359.2 1271.5 361.8 1267.4 363.8 1263.0 365.0 1258.3 365.5 1253.4 365.2 1248.6 364.2 1243.8 362.4 1239.3 359.9 1235.1 131.2 905.7 128.1 902.0 124.5 898.7 120.4 896.1 116.0 894.1 111.3 892.9 106.4 892.4 101.6 892.7 96.8 893.7 92.3 895.5 88.1 897.9 -44.2 989.8 -47.9 992.8 -51.2 996.5 -53.8 1000.6 -55.8 1005.0 -57.0 1009.7 -57.5 1014.6 -57.2 1019.4 -56.2 1024.2 -54.4 1028.7 -51.9 1032.9 176.8 1362.3 179.9 1366.0 183.5 1369.3 187.6 1371.9 192.0 1373.9 196.7 1375.1 201.6 1375.6 206.4 1375.3 211.2 1374.3 215.7 1372.5 219.9 1370.1Z" fill="#000"/>
<line x1="296" y1="1213" x2="312" y2="1311" stroke="#3672cc" stroke-width="1.3"/>
<line x1="300" y1="1135.5" x2="527" y2="1135.5" stroke="#b8403c" stroke-width="1.2"/>
<path d="M521 1131.5 L528 1135.5 L521 1139.5" fill="none" stroke="#c8453f" stroke-width="1.2"/>
<circle cx="154" cy="1135" r="58" fill="none" stroke="#8a8a8a" stroke-width="1.3"/>
<circle cx="154" cy="1135" r="40" fill="none" stroke="#d8453f" stroke-width="1.4"/>
<g stroke-width="1.6" stroke-linecap="round">
<line x1="154" y1="1135" x2="133" y2="1102" stroke="#3bd06a"/>
<line x1="154" y1="1135" x2="122" y2="1158" stroke="#35c88a"/>
<line x1="154" y1="1135" x2="187" y2="1113" stroke="#3a78e0"/>
<line x1="154" y1="1135" x2="176" y2="1167" stroke="#4aa8e8"/>
</g>
<g font-size="11.5" font-weight="bold"><text x="488" y="967" fill="#36c85e">Y</text><text x="514" y="967" fill="#e04848">X</text><text x="488.5" y="993" fill="#3c78d8">Z</text></g>
<path d="M493 962 H510" stroke="#d04040" stroke-width="1.2"/><path d="M493 962 V979" stroke="#3c78d8" stroke-width="1.2"/><path d="M493 958 V966" stroke="#36c85e" stroke-width="1.2"/>
<g stroke="#f4f4f4" stroke-width="1.3" stroke-linecap="round">
<line x1="524.8" y1="1203.2" x2="528.8" y2="1210.4"/>
<line x1="518.4" y1="1209.6" x2="528" y2="1218.4"/>
<line x1="510.4" y1="1225.6" x2="528.8" y2="1223.2"/>
<line x1="513.6" y1="1230.4" x2="528.8" y2="1226.4"/>
<line x1="523.2" y1="1247.2" x2="528.8" y2="1237.6"/>
<line x1="522" y1="1219" x2="528.8" y2="1224.5"/>
</g>
<rect x="420" y="1290" width="106" height="19" fill="#333"/>
<text x="423" y="1303.5" font-size="11.3" fill="#e4e4e4">网格间距 : 0.5 cm</text>
</g>
<defs><clipPath id="cBR"><rect x="534" y="924" width="466" height="387"/></clipPath>
<pattern id="ld" width="3.2" height="3.2" patternUnits="userSpaceOnUse"><rect width="3.2" height="3.2" fill="#000"/><rect x="1" y="1" width="1.1" height="1.1" fill="#8a8a8a"/></pattern>
</defs>
<g clip-path="url(#cBR)">
<g stroke="#3a3a3a" stroke-width="1">
<line x1="534" y1="880.8" x2="1000" y2="556.9"/>
<line x1="534" y1="914.4" x2="1000" y2="590.5" stroke="#454545"/>
<line x1="534" y1="948.0" x2="1000" y2="624.1"/>
<line x1="534" y1="981.6" x2="1000" y2="657.7"/>
<line x1="534" y1="1015.2" x2="1000" y2="691.3"/>
<line x1="534" y1="1048.8" x2="1000" y2="724.9"/>
<line x1="534" y1="1082.4" x2="1000" y2="758.5" stroke="#454545"/>
<line x1="534" y1="1116.0" x2="1000" y2="792.1"/>
<line x1="534" y1="1149.6" x2="1000" y2="825.7"/>
<line x1="534" y1="1183.2" x2="1000" y2="859.3"/>
<line x1="534" y1="1216.8" x2="1000" y2="892.9"/>
<line x1="534" y1="1250.4" x2="1000" y2="926.5" stroke="#454545"/>
<line x1="534" y1="1284.0" x2="1000" y2="960.1"/>
<line x1="534" y1="1317.6" x2="1000" y2="993.7"/>
<line x1="534" y1="1351.2" x2="1000" y2="1027.3"/>
<line x1="534" y1="1384.8" x2="1000" y2="1060.9"/>
<line x1="534" y1="1418.4" x2="1000" y2="1094.5" stroke="#454545"/>
<line x1="534" y1="1452.0" x2="1000" y2="1128.1"/>
<line x1="534" y1="1485.6" x2="1000" y2="1161.7"/>
<line x1="534" y1="1519.2" x2="1000" y2="1195.3"/>
<line x1="534" y1="1552.8" x2="1000" y2="1228.9"/>
<line x1="534" y1="1586.4" x2="1000" y2="1262.5" stroke="#454545"/>
<line x1="534" y1="1620.0" x2="1000" y2="1296.1"/>
<line x1="534" y1="1653.6" x2="1000" y2="1329.7"/>
<line x1="534" y1="1687.2" x2="1000" y2="1363.3"/>
<line x1="181.2" y1="924" x2="448.1" y2="1311"/>
<line x1="215.2" y1="924" x2="482.1" y2="1311" stroke="#454545"/>
<line x1="249.2" y1="924" x2="516.1" y2="1311"/>
<line x1="283.2" y1="924" x2="550.1" y2="1311"/>
<line x1="317.2" y1="924" x2="584.1" y2="1311"/>
<line x1="351.2" y1="924" x2="618.1" y2="1311"/>
<line x1="385.2" y1="924" x2="652.1" y2="1311" stroke="#454545"/>
<line x1="419.2" y1="924" x2="686.1" y2="1311"/>
<line x1="453.2" y1="924" x2="720.1" y2="1311"/>
<line x1="487.2" y1="924" x2="754.1" y2="1311"/>
<line x1="521.2" y1="924" x2="788.1" y2="1311"/>
<line x1="555.2" y1="924" x2="822.1" y2="1311" stroke="#454545"/>
<line x1="589.2" y1="924" x2="856.1" y2="1311"/>
<line x1="623.2" y1="924" x2="890.1" y2="1311"/>
<line x1="657.2" y1="924" x2="924.1" y2="1311"/>
<line x1="691.2" y1="924" x2="958.1" y2="1311"/>
<line x1="725.2" y1="924" x2="992.1" y2="1311" stroke="#454545"/>
<line x1="759.2" y1="924" x2="1026.1" y2="1311"/>
<line x1="793.2" y1="924" x2="1060.1" y2="1311"/>
<line x1="827.2" y1="924" x2="1094.1" y2="1311"/>
<line x1="861.2" y1="924" x2="1128.1" y2="1311"/>
<line x1="895.2" y1="924" x2="1162.1" y2="1311" stroke="#454545"/>
<line x1="929.2" y1="924" x2="1196.1" y2="1311"/>
<line x1="963.2" y1="924" x2="1230.1" y2="1311"/>
<line x1="997.2" y1="924" x2="1264.1" y2="1311"/>
</g>
<rect x="534" y="925" width="42" height="19" fill="#2d2d2d" opacity="0.85"/>
<text x="537.5" y="939.5" font-size="11.5" fill="#dcdcdc">顶视图</text>
<line x1="554.5" y1="924.0" x2="823.5" y2="1311.0" stroke="#3672cc" stroke-width="1.2"/>
<line x1="534.0" y1="1226.5" x2="611.0" y2="1311.0" stroke="#3672cc" stroke-width="1.2"/>
<line x1="534.0" y1="1282.0" x2="558.0" y2="1311.0" stroke="#3672cc" stroke-width="1.2"/>
<path d="M716.5 1315 V1090 Q716.5 1019.5 787 1019.5 H1005 V1040 H800 Q735 1040 735 1100 V1315 Z" fill="#050505"/>
<path d="M719 1315 V1090 Q719 1022 787 1022 H1005" fill="none" stroke="#3a3a3a" stroke-width="3" stroke-dasharray="1 1.6" opacity="0.8"/>
<path d="M725.5 1315 V1092 Q725.5 1029.5 789 1029.5 H1005" fill="none" stroke="#303030" stroke-width="1"/>
<path d="M722 1315 V1091 Q722 1025 788 1025 H1005" fill="none" stroke="#2a2a2a" stroke-width="0.8"/>
<path d="M955 1078 Q950 1046 968 1043 H984 L989 1047 L984 1050 H981" fill="none" stroke="#060606" stroke-width="2.4"/>
<path d="M736 1311 V1285 Q737 1272 748 1268" fill="none" stroke="#101010" stroke-width="1.5"/>
<path d="M741 1311 V1290" fill="none" stroke="#101010" stroke-width="1"/>
<rect x="735" y="1039.5" width="240.5" height="253" rx="58" ry="58" fill="#040404"/>
<rect x="754" y="1057.5" width="202.5" height="213" rx="40" ry="40" fill="#353535"/>
<g stroke="#161616" stroke-width="1" fill="none">
<line x1="754" y1="1089" x2="956" y2="1089"/>
<line x1="754" y1="1112" x2="956" y2="1112"/>
<line x1="754" y1="1165" x2="956" y2="1165"/>
<line x1="754" y1="1221" x2="956" y2="1221"/>
<line x1="754" y1="1241" x2="956" y2="1241"/>
<line x1="805" y1="1058" x2="805" y2="1270"/>
<line x1="905" y1="1058" x2="905" y2="1270"/>
<line x1="937" y1="1058" x2="937" y2="1270"/>
<line x1="855" y1="1058" x2="855" y2="1270"/>
</g>
<rect x="735" y="1039.5" width="240.5" height="253" rx="58" ry="58" fill="none" stroke="#cf7d2a" stroke-width="2.2"/>
<circle cx="805" cy="1111" r="46.5" fill="#030303" stroke="#cf7d2a" stroke-width="2.2"/>
<circle cx="805" cy="1111" r="36" fill="none" stroke="#9a9a9a" stroke-width="1.5" stroke-dasharray="1.3 2.8" opacity="0.32"/>
<circle cx="805" cy="1111" r="32.5" fill="none" stroke="#9a9a9a" stroke-width="1.5" stroke-dasharray="1.3 2.8" opacity="0.32"/>
<circle cx="805" cy="1111" r="29" fill="none" stroke="#9a9a9a" stroke-width="1.3" stroke-dasharray="1.2 3" opacity="0.28"/>
<circle cx="805" cy="1111" r="24.5" fill="none" stroke="#9a9a9a" stroke-width="1.3" stroke-dasharray="1.2 3" opacity="0.25"/>
<circle cx="805" cy="1111" r="20" fill="none" stroke="#9a9a9a" stroke-width="1.2" stroke-dasharray="1.2 3.2" opacity="0.22"/>
<circle cx="805" cy="1111" r="14" fill="none" stroke="#9a9a9a" stroke-width="1.1" stroke-dasharray="1 3.2" opacity="0.2"/>
<circle cx="904.6" cy="1165" r="46.5" fill="#030303" stroke="#cf7d2a" stroke-width="2.2"/>
<circle cx="904.6" cy="1165" r="36" fill="none" stroke="#9a9a9a" stroke-width="1.5" stroke-dasharray="1.3 2.8" opacity="0.32"/>
<circle cx="904.6" cy="1165" r="32.5" fill="none" stroke="#9a9a9a" stroke-width="1.5" stroke-dasharray="1.3 2.8" opacity="0.32"/>
<circle cx="904.6" cy="1165" r="29" fill="none" stroke="#9a9a9a" stroke-width="1.3" stroke-dasharray="1.2 3" opacity="0.28"/>
<circle cx="904.6" cy="1165" r="24.5" fill="none" stroke="#9a9a9a" stroke-width="1.3" stroke-dasharray="1.2 3" opacity="0.25"/>
<circle cx="904.6" cy="1165" r="20" fill="none" stroke="#9a9a9a" stroke-width="1.2" stroke-dasharray="1.2 3.2" opacity="0.22"/>
<circle cx="904.6" cy="1165" r="14" fill="none" stroke="#9a9a9a" stroke-width="1.1" stroke-dasharray="1 3.2" opacity="0.2"/>
<circle cx="805" cy="1218.4" r="46.5" fill="#030303" stroke="#cf7d2a" stroke-width="2.2"/>
<circle cx="805" cy="1218.4" r="36" fill="none" stroke="#9a9a9a" stroke-width="1.5" stroke-dasharray="1.3 2.8" opacity="0.32"/>
<circle cx="805" cy="1218.4" r="32.5" fill="none" stroke="#9a9a9a" stroke-width="1.5" stroke-dasharray="1.3 2.8" opacity="0.32"/>
<circle cx="805" cy="1218.4" r="29" fill="none" stroke="#9a9a9a" stroke-width="1.3" stroke-dasharray="1.2 3" opacity="0.28"/>
<circle cx="805" cy="1218.4" r="24.5" fill="none" stroke="#9a9a9a" stroke-width="1.3" stroke-dasharray="1.2 3" opacity="0.25"/>
<circle cx="805" cy="1218.4" r="20" fill="none" stroke="#9a9a9a" stroke-width="1.2" stroke-dasharray="1.2 3.2" opacity="0.22"/>
<circle cx="805" cy="1218.4" r="14" fill="none" stroke="#9a9a9a" stroke-width="1.1" stroke-dasharray="1 3.2" opacity="0.2"/>
<circle cx="905" cy="1089" r="20.5" fill="#030303" stroke="#cf7d2a" stroke-width="2.1"/>
<circle cx="905" cy="1241" r="20.5" fill="#363636" stroke="#cf7d2a" stroke-width="2.1"/>
<circle cx="936.5" cy="1221.5" r="5.5" fill="#1a1a1a" stroke="#cf7d2a" stroke-width="1.6"/>
<line x1="609.0" y1="925.0" x2="877.5" y2="1311.0" stroke="#3672cc" stroke-width="1.2"/>
<line x1="900.0" y1="924.0" x2="1000.0" y2="1122.0" stroke="#3672cc" stroke-width="1.2"/>
<line x1="944.0" y1="924.0" x2="1000.0" y2="1043.0" stroke="#3672cc" stroke-width="1.2"/>
<g stroke="#f4f4f4" stroke-width="1.4" stroke-linecap="round">
<line x1="854" y1="1078" x2="854" y2="1133.5"/>
<line x1="854" y1="1105" x2="881.5" y2="1105"/>
<line x1="854" y1="1105" x2="873.4" y2="1086.4"/>
<line x1="854" y1="1105" x2="873" y2="1124.5"/>
<line x1="952" y1="1138.6" x2="952" y2="1194.4"/>
<line x1="946" y1="1166.5" x2="958" y2="1166.5"/>
<line x1="854.5" y1="1226.5" x2="862" y2="1200.4"/>
<line x1="854.5" y1="1226.5" x2="879.4" y2="1213"/>
<line x1="854.5" y1="1226.5" x2="881.5" y2="1233.4"/>
<line x1="854.5" y1="1226.5" x2="869.5" y2="1250.5"/>
<line x1="854.5" y1="1226.5" x2="848.5" y2="1253.5"/>
<line x1="929" y1="1166.5" x2="946" y2="1166.5" stroke-dasharray="2 2"/>
<line x1="932" y1="1148" x2="938" y2="1185" stroke-dasharray="1.5 4" stroke-width="1.2"/>
</g>
</g>
<rect x="0" y="1311" width="1000" height="88" fill="#292929"/>
<rect x="0" y="1311" width="1000" height="2" fill="#1c1c1c"/>
<rect x="0" y="1310.5" width="531" height="1.2" fill="#555"/>
<rect x="529.8" y="924" width="1.3" height="387" fill="#5a5a5a"/>
<line x1="0" y1="1315.5" x2="1000" y2="1315.5" stroke="#424242" stroke-width="2.4" stroke-dasharray="1.6 2.4"/>
<rect x="0" y="1386" width="1000" height="13" fill="#3b3b3b"/>
<rect x="255.0" y="1326" width="27.5" height="26" fill="#3b3b3b"/>
<rect x="283.3" y="1326" width="27.5" height="26" fill="#3b3b3b"/>
<rect x="311.6" y="1326" width="27.5" height="26" fill="#3b3b3b"/>
<rect x="339.9" y="1326" width="27.5" height="26" fill="#3b3b3b"/>
<rect x="368.2" y="1326" width="27.5" height="26" fill="#3b3b3b"/>
<rect x="396.5" y="1326" width="27.5" height="26" fill="#3b3b3b"/>
<rect x="424.8" y="1326" width="27.5" height="26" fill="#3b3b3b"/>
<rect x="467.0" y="1326" width="27.5" height="26" fill="#5b5fb0"/>
<rect x="495.3" y="1326" width="27.5" height="26" fill="#5b5fb0"/>
<rect x="523.6" y="1326" width="27.5" height="26" fill="#3b3b3b"/>
<rect x="564" y="1327" width="90" height="24" rx="4" fill="#222"/>
<rect x="666.0" y="1326" width="27.6" height="26" fill="#3b3b3b"/>
<rect x="694.4" y="1326" width="27.6" height="26" fill="#3b3b3b"/>
<rect x="722.8" y="1326" width="27.6" height="26" fill="#3b3b3b"/>
<rect x="764.0" y="1326" width="27.0" height="26" fill="#3b3b3b"/>
<rect x="791.8" y="1326" width="27.0" height="26" fill="#3b3b3b"/>
<rect x="831.0" y="1326" width="27.6" height="26" fill="#3b3b3b"/>
<rect x="859.4" y="1326" width="27.6" height="26" fill="#3b3b3b"/>
<rect x="887.8" y="1326" width="27.6" height="26" fill="#3b3b3b"/>
<rect x="916.2" y="1326" width="27.6" height="26" fill="#3b3b3b"/>
<rect x="944.6" y="1326" width="27.6" height="26" fill="#5b5fb0"/>
<g font-size="11.5" fill="#c8c8c8" text-anchor="middle">
<text x="57.0" y="1371">10</text>
<text x="136.4" y="1371">15</text>
<text x="215.8" y="1371">20</text>
<text x="295.2" y="1371">25</text>
<text x="374.6" y="1371">30</text>
<text x="454.0" y="1371">35</text>
<text x="533.4" y="1371">40</text>
<text x="612.8" y="1371">45</text>
<text x="692.2" y="1371">50</text>
<text x="771.6" y="1371">55</text>
<text x="851.0" y="1371">60</text>
<text x="930.4" y="1371">65</text>
</g>
<g stroke="#bdbdbd" stroke-width="1">
<line x1="9.4" y1="1380.8" x2="9.4" y2="1383.2"/>
<line x1="25.2" y1="1380.8" x2="25.2" y2="1383.2"/>
<line x1="41.1" y1="1380.8" x2="41.1" y2="1383.2"/>
<line x1="57.0" y1="1379.2" x2="57.0" y2="1383.2"/>
<line x1="72.9" y1="1380.8" x2="72.9" y2="1383.2"/>
<line x1="88.8" y1="1380.8" x2="88.8" y2="1383.2"/>
<line x1="104.6" y1="1380.8" x2="104.6" y2="1383.2"/>
<line x1="120.5" y1="1380.8" x2="120.5" y2="1383.2"/>
<line x1="136.4" y1="1379.2" x2="136.4" y2="1383.2"/>
<line x1="152.3" y1="1380.8" x2="152.3" y2="1383.2"/>
<line x1="168.2" y1="1380.8" x2="168.2" y2="1383.2"/>
<line x1="184.0" y1="1380.8" x2="184.0" y2="1383.2"/>
<line x1="199.9" y1="1380.8" x2="199.9" y2="1383.2"/>
<line x1="215.8" y1="1379.2" x2="215.8" y2="1383.2"/>
<line x1="231.7" y1="1380.8" x2="231.7" y2="1383.2"/>
<line x1="247.6" y1="1380.8" x2="247.6" y2="1383.2"/>
<line x1="263.4" y1="1380.8" x2="263.4" y2="1383.2"/>
<line x1="279.3" y1="1380.8" x2="279.3" y2="1383.2"/>
<line x1="295.2" y1="1379.2" x2="295.2" y2="1383.2"/>
<line x1="311.1" y1="1380.8" x2="311.1" y2="1383.2"/>
<line x1="327.0" y1="1380.8" x2="327.0" y2="1383.2"/>
<line x1="342.8" y1="1380.8" x2="342.8" y2="1383.2"/>
<line x1="358.7" y1="1380.8" x2="358.7" y2="1383.2"/>
<line x1="374.6" y1="1379.2" x2="374.6" y2="1383.2"/>
<line x1="390.5" y1="1380.8" x2="390.5" y2="1383.2"/>
<line x1="406.4" y1="1380.8" x2="406.4" y2="1383.2"/>
<line x1="422.2" y1="1380.8" x2="422.2" y2="1383.2"/>
<line x1="438.1" y1="1380.8" x2="438.1" y2="1383.2"/>
<line x1="454.0" y1="1379.2" x2="454.0" y2="1383.2"/>
<line x1="469.9" y1="1380.8" x2="469.9" y2="1383.2"/>
<line x1="485.8" y1="1380.8" x2="485.8" y2="1383.2"/>
<line x1="501.6" y1="1380.8" x2="501.6" y2="1383.2"/>
<line x1="517.5" y1="1380.8" x2="517.5" y2="1383.2"/>
<line x1="533.4" y1="1379.2" x2="533.4" y2="1383.2"/>
<line x1="549.3" y1="1380.8" x2="549.3" y2="1383.2"/>
<line x1="565.2" y1="1380.8" x2="565.2" y2="1383.2"/>
<line x1="581.0" y1="1380.8" x2="581.0" y2="1383.2"/>
<line x1="596.9" y1="1380.8" x2="596.9" y2="1383.2"/>
<line x1="612.8" y1="1379.2" x2="612.8" y2="1383.2"/>
<line x1="628.7" y1="1380.8" x2="628.7" y2="1383.2"/>
<line x1="644.6" y1="1380.8" x2="644.6" y2="1383.2"/>
<line x1="660.4" y1="1380.8" x2="660.4" y2="1383.2"/>
<line x1="676.3" y1="1380.8" x2="676.3" y2="1383.2"/>
<line x1="692.2" y1="1379.2" x2="692.2" y2="1383.2"/>
<line x1="708.1" y1="1380.8" x2="708.1" y2="1383.2"/>
<line x1="724.0" y1="1380.8" x2="724.0" y2="1383.2"/>
<line x1="739.8" y1="1380.8" x2="739.8" y2="1383.2"/>
<line x1="755.7" y1="1380.8" x2="755.7" y2="1383.2"/>
<line x1="771.6" y1="1379.2" x2="771.6" y2="1383.2"/>
<line x1="787.5" y1="1380.8" x2="787.5" y2="1383.2"/>
<line x1="803.4" y1="1380.8" x2="803.4" y2="1383.2"/>
<line x1="819.2" y1="1380.8" x2="819.2" y2="1383.2"/>
<line x1="835.1" y1="1380.8" x2="835.1" y2="1383.2"/>
<line x1="851.0" y1="1379.2" x2="851.0" y2="1383.2"/>
<line x1="866.9" y1="1380.8" x2="866.9" y2="1383.2"/>
<line x1="882.8" y1="1380.8" x2="882.8" y2="1383.2"/>
<line x1="898.6" y1="1380.8" x2="898.6" y2="1383.2"/>
<line x1="914.5" y1="1380.8" x2="914.5" y2="1383.2"/>
<line x1="930.4" y1="1379.2" x2="930.4" y2="1383.2"/>
<line x1="946.3" y1="1380.8" x2="946.3" y2="1383.2"/>
<line x1="962.2" y1="1380.8" x2="962.2" y2="1383.2"/>
<line x1="978.0" y1="1380.8" x2="978.0" y2="1383.2"/>
<line x1="993.9" y1="1380.8" x2="993.9" y2="1383.2"/>
<line x1="374.6" y1="1362" x2="374.6" y2="1384"/><line x1="851" y1="1362" x2="851" y2="1384"/>
</g>
<rect x="0" y="1387" width="1.6" height="11" fill="#cfcfcf"/>
<rect x="0" y="1377" width="1000" height="1" fill="#353535"/>
<text x="6" y="1396.5" font-size="10.5" fill="#d0d0d0" letter-spacing="1">0 F</text>
<text x="608.5" y="1342.5" font-size="11" fill="#e0e0e0" text-anchor="middle" letter-spacing="0.5">0 F</text>
<rect x="262.5" y="1331.5" width="2.4" height="15.0" fill="#c6c6c6"/>
<path d="M266.0 1339.0 L276.0 1331.5 V1346.5 Z" fill="#c6c6c6"/>
<path d="M285.5 1339.0 l4.0 -4.0 l4.0 4.0 l-4.0 4.0 Z" fill="none" stroke="#c6c6c6" stroke-width="1.5"/>
<path d="M294.5 1339.0 L304.5 1331.5 V1346.5 Z" fill="#c6c6c6"/>
<path d="M319.0 1339.0 L329.0 1331.5 V1346.5 Z" fill="#c6c6c6"/>
<rect x="330.5" y="1331.5" width="2.4" height="15.0" fill="#c6c6c6"/>
<path d="M348.6 1331 L361.8 1339 L348.6 1347 Z" fill="#c6c6c6"/>
<rect x="376.5" y="1331.5" width="2.4" height="15.0" fill="#c6c6c6"/>
<path d="M390.0 1339.0 L380.0 1331.5 V1346.5 Z" fill="#c6c6c6"/>
<path d="M412.0 1339.0 L402.0 1331.5 V1346.5 Z" fill="#c6c6c6"/>
<path d="M413.5 1339.0 l4.0 -4.0 l4.0 4.0 l-4.0 4.0 Z" fill="none" stroke="#c6c6c6" stroke-width="1.5"/>
<path d="M445.5 1339.0 L435.5 1331.5 V1346.5 Z" fill="#c6c6c6"/>
<rect x="446.0" y="1331.5" width="2.4" height="15.0" fill="#c6c6c6"/>
<g fill="none" stroke="#dcdcf0" stroke-width="1.8" stroke-linejoin="round"><path d="M473.5 1338 V1333.5 H487.5 M484.5 1330.3 L488 1333.5 L484.5 1336.7"/><path d="M488 1340 V1344.5 H474 M477 1341.3 L473.5 1344.5 L477 1347.7"/></g>
<path d="M490 1352 h4.5 v-4.5z" fill="#dcdcf0"/>
<text x="509" y="1338.5" font-size="10" fill="#dcdcf0" text-anchor="middle">A</text>
<g fill="#dcdcf0"><rect x="500.5" y="1342" width="2" height="5"/><rect x="504.5" y="1342" width="2" height="5"/><rect x="508.5" y="1342" width="2" height="5"/><rect x="512.5" y="1341.5" width="5.5" height="5.5"/></g>
<path d="M518 1352 h4.5 v-4.5z" fill="#dcdcf0"/>
<path d="M530 1336 h3.5 l5 -4.5 v15 l-5 -4.5 h-3.5z" fill="#c6c6c6"/><path d="M541 1334.5 q3.2 4.5 0 9 M543.5 1331.5 q5.5 7.5 0 15" fill="none" stroke="#c6c6c6" stroke-width="1.7"/>
<path d="M572.5 1335 l-3.5 4 l3.5 4 M646 1335 l3.5 4 l-3.5 4" fill="none" stroke="#8a8a8a" stroke-width="1.3"/>
<circle cx="679.8" cy="1339" r="10" fill="#e45858"/><path d="M674.8 1339.0 l5.0 -5.0 l5.0 5.0 l-5.0 5.0 Z" fill="none" stroke="#3a2020" stroke-width="1.6"/>
<path d="M689.5 1352 h4.5 v-4.5z" fill="#c6c6c6"/>
<circle cx="708.6" cy="1339" r="10" fill="#e45858"/><text x="708.6" y="1343.6" font-size="13" fill="#3a2020" text-anchor="middle">A</text>
<circle cx="736.8" cy="1339" r="10" fill="#c6c6c6"/><circle cx="736.8" cy="1339" r="4.6" fill="none" stroke="#333" stroke-width="3" stroke-dasharray="2 1.6"/><circle cx="736.8" cy="1339" r="3.6" fill="none" stroke="#333" stroke-width="1.6"/>
<circle cx="776.8" cy="1339" r="10" fill="#c6c6c6"/><rect x="772.6" y="1332.5" width="8.4" height="13" rx="4.2" fill="none" stroke="#333" stroke-width="1.5"/><line x1="776.8" y1="1333" x2="776.8" y2="1339" stroke="#333" stroke-width="1.5"/>
<circle cx="805.6" cy="1339" r="9" fill="none" stroke="#c6c6c6" stroke-width="1.6" stroke-dasharray="11 3.2"/><path d="M802.0 1339.0 l3.6 -3.6 l3.6 3.6 l-3.6 3.6 Z" fill="none" stroke="#c6c6c6" stroke-width="1.5"/><line x1="808" y1="1336" x2="813" y2="1330.5" stroke="#c6c6c6" stroke-width="1.5"/>
<path d="M841.0 1339.0 l3.6 -3.6 l3.6 3.6 l-3.6 3.6 Z" fill="none" stroke="#c6c6c6" stroke-width="1.5"/>
<g fill="#c6c6c6"><path d="M844.6 1328 l3 3.5 h-6z"/><path d="M844.6 1350 l3 -3.5 h-6z"/><path d="M833.6 1339 l3.5 -3 v6z"/><path d="M855.6 1339 l-3.5 -3 v6z"/></g>
<path d="M870.2 1339.0 l3.6 -3.6 l3.6 3.6 l-3.6 3.6 Z" fill="none" stroke="#c6c6c6" stroke-width="1.5"/>
<path d="M867.3 1333 a9 9 0 0 0 -1 12 M880.3 1345 a9 9 0 0 0 1 -12" fill="none" stroke="#c6c6c6" stroke-width="1.6"/>
<path d="M869.8 1329.5 l0.5 4.5 l-4.5 -0.5z M877.8 1348.5 l-0.5 -4.5 l4.5 0.5z" fill="#c6c6c6"/>
<path d="M894.5 1338 V1330.5 H910.0 V1347.5 H903.0" fill="none" stroke="#c6c6c6" stroke-width="1.7"/>
<path d="M894.9 1343.5 l3.6 -3.6 l3.6 3.6 l-3.6 3.6 Z" fill="none" stroke="#c6c6c6" stroke-width="1.5"/>
<rect x="922.4" y="1331" width="18" height="6.6" rx="3.3" fill="#c6c6c6"/><rect x="922.4" y="1340.6" width="18" height="6.6" rx="3.3" fill="#c6c6c6"/>
<g stroke="#e4e4f4" stroke-width="1.8" fill="none" stroke-linecap="round"><path d="M954.0 1331 L966.5 1347.5"/><path d="M964.0 1332 q-2 5 -6 8"/></g><circle cx="953.0" cy="1344.5" r="2.6" fill="#e4e4f4"/><circle cx="964.5" cy="1332" r="1.8" fill="#e4e4f4"/>
<g fill="#a2a2a2"><path d="M454 911 q-1.5 -2 0 -2.5 q1 0 2 1.5 v-5.5 q0.8 -1 1.6 0 v-1 q0.9 -1 1.8 0 v0.6 q0.9 -0.9 1.8 0 v1 q0.8 -0.8 1.6 0 v7 q0 4.5 -4 4.5 h-1.5 q-2.5 0 -3.8 -3z"/></g>
<g fill="#a2a2a2"><path d="M478.8 903.5 l4 4.5 h-2.8 v2.2 h4.5 v2.2 h-4.5 v2.2 h2.8 l-4 4.5 l-4 -4.5 h2.8 v-2.2 h-4.5 v-2.2 h4.5 v-2.2 h-2.8z"/></g>
<path d="M496.5 905.5 a6.3 6.3 0 1 0 7 0" fill="none" stroke="#a2a2a2" stroke-width="1.7"/><circle cx="500" cy="911.5" r="2" fill="#a2a2a2"/><path d="M501.5 902.5 l4 2.6 l-4.2 2.2z" fill="#a2a2a2"/>
<rect x="513.5" y="904.5" width="13" height="13" fill="none" stroke="#a2a2a2" stroke-width="1.5"/><path d="M513.5 910.5 h7 v7" fill="none" stroke="#a2a2a2" stroke-width="1.5"/>
</svg>
<span class="dd" style="left:74.1px;top:1325px;letter-spacing:3.19px;font-weight:bold">Design</span>
<span class="dd" style="left:210px;top:1325px;letter-spacing:3.96px">Draft</span>
</body></html>
